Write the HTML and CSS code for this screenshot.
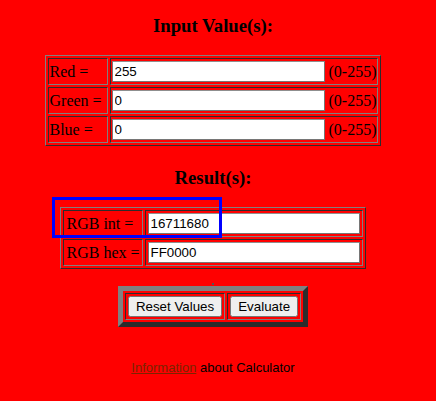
FILE: index.html
```html
<!DOCTYPE html>
<html>
<head>
<meta charset="utf-8">
<link rel="stylesheet" href="styles.css">
</head>
<body>
<div class="page">
  <h3 class="title">Input Value(s):</h3>
  <table class="grid inputs">
    <tr><td class="label">Red =</td><td class="field"><input class="box" type="text" value="255"> (0-255)</td></tr>
    <tr><td class="label">Green =</td><td class="field"><input class="box" type="text" value="0"> (0-255)</td></tr>
    <tr><td class="label">Blue =</td><td class="field"><input class="box" type="text" value="0"> (0-255)</td></tr>
  </table>
  <h3 class="title result-title">Result(s):</h3>
  <table class="grid results">
    <tr><td class="label">RGB int =</td><td class="field"><input class="box" type="text" value="16711680"></td></tr>
    <tr><td class="label">RGB hex =</td><td class="field"><input class="box" type="text" value="FF0000"></td></tr>
  </table>
  <div class="dot"></div>
  <table class="actions">
    <tr><td class="cell"><button class="btn">Reset Values</button></td><td class="cell"><button class="btn">Evaluate</button></td></tr>
  </table>
  <p class="info"><a class="link" href="#">Information</a> about Calculator</p>
  <div class="highlight"></div>
</div>
</body>
</html>
```

FILE: styles.css
```css
html, body {
  margin: 0;
  padding: 0;
  background: #ff0000;
}
body {
  font-family: "Liberation Serif", "Times New Roman", serif;
  font-size: 16px;
  color: #000;
}
.page {
  position: relative;
  width: 426px;
  text-align: center;
  padding-top: 15px;
  height: 386px;
}
.title {
  font-size: 18.72px;
  font-weight: bold;
  margin: 0 0 19px;
  line-height: 21px;
}
.result-title {
  margin-top: 21px;
  margin-bottom: 19px;
}
.grid {
  margin: 0 auto;
  border: 1px outset #808080;
  border-spacing: 2px;
  text-align: left;
}
.grid td {
  border: 1px inset #808080;
  white-space: nowrap;
}
.inputs td {
  padding: 1px;
  line-height: 23px;
}
.inputs .label {
  width: 56px;
}
.results td {
  padding: 2px;
  line-height: 21px;
}
.box {
  box-sizing: border-box;
  height: 21px;
  border: 1px solid #767676;
  border-top-color: #8f8f8f;
  padding: 1px 2px;
  font-family: "Liberation Sans", Arial, sans-serif;
  font-size: 13.33px;
  line-height: normal;
  color: #000;
  background: #fff;
  vertical-align: top;
  margin: 0;
}
.inputs .box {
  width: 213px;
  margin-top: 1px;
}
.results .box {
  width: 212px;
}
.dot {
  width: 2px;
  height: 2px;
  background: #555;
  margin: 14px auto 1px;
}
.actions {
  margin: 0 auto;
  border: 5px outset #808080;
  border-spacing: 2px;
}
.actions .cell {
  border: 1px inset #808080;
  padding: 2px;
}
.btn {
  font-family: "Liberation Sans", Arial, sans-serif;
  font-size: 13.33px;
  padding: 1px 6px;
  margin: 0;
}
.info {
  font-family: "Liberation Sans", Arial, sans-serif;
  font-size: 13px;
  margin: 33px 0 0;
}
.link {
  color: #7a2400;
}
.highlight {
  position: absolute;
  left: 52px;
  top: 197px;
  width: 164px;
  height: 35px;
  border: 3px solid #0000ff;
}
```
